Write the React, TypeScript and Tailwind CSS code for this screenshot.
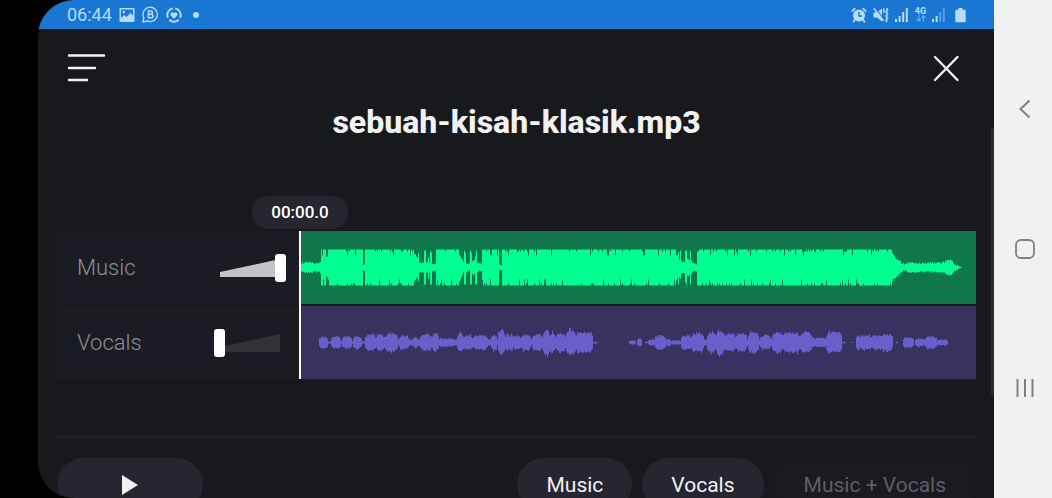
import { useMemo, useState } from "react";

type Point = [x: number, amplitude: number];

const WAVE_WIDTH = 675;
const WAVE_HEIGHT = 73;

// Envelope of the music stem: full level with short drop-outs and a fade-out.
const MUSIC: Point[] = [
  [0, 4], [6, 5], [13, 4], [19, 5], [20, 17], [24, 17], [25, 10], [26, 10], [27, 17], [61, 17],
  [62, 3], [63, 3], [64, 17], [112, 17], [113, 14], [116, 9], [117, 14], [118, 5], [122, 5],
  [123, 16], [124, 16], [125, 5], [126, 5], [127, 11], [128, 5], [129, 16], [130, 16], [131, 4],
  [134, 4], [135, 17], [157, 17], [158, 13], [161, 8], [162, 5], [163, 16], [164, 16], [165, 4],
  [168, 4], [169, 16], [170, 16], [171, 7], [173, 7], [174, 16], [175, 16], [176, 4], [180, 4],
  [181, 17], [188, 17], [189, 12], [190, 17], [197, 17], [198, 3], [200, 3], [201, 17],
  [374, 17], [375, 12], [376, 12], [377, 16], [378, 9], [379, 16], [380, 6], [383, 6], [384, 16],
  [385, 16], [386, 8], [388, 8], [389, 16], [390, 6], [391, 4], [395, 4], [396, 17],
  [590, 17], [592, 12], [597, 7], [603, 3], [609, 5], [617, 4], [642, 5], [645, 7], [649, 8],
  [653, 4], [658, 1], [661, 0], [674, 0],
];

// Envelope of the vocal stem: one entry for each sung phrase (start, end, level).
const PHRASES: [number, number, number][] = [
  [18, 27, 6], [30, 40, 6], [41, 51, 6], [52, 61, 6], [64, 75, 8], [75, 84, 8], [84, 97, 9],
  [98, 108, 7], [111, 118, 5], [119, 131, 8], [131, 138, 9], [137, 153, 4], [156, 163, 9],
  [162, 172, 7], [172, 187, 7], [190, 196, 8], [197, 204, 13], [204, 209, 9], [209, 212, 11],
  [212, 220, 7], [220, 230, 8], [231, 242, 8], [242, 249, 13], [249, 254, 10], [254, 265, 9],
  [265, 275, 12], [275, 292, 10], [292, 297, 1], [328, 335, 2], [336, 341, 4], [344, 347, 1],
  [347, 355, 3], [354, 365, 7], [365, 370, 4], [370, 380, 2], [380, 391, 7], [390, 403, 9],
  [406, 415, 10], [415, 424, 12], [424, 435, 9], [435, 446, 9], [447, 458, 10],
  [459, 470, 7], [471, 482, 10], [482, 499, 10], [499, 511, 10], [510, 514, 6],
  [514, 525, 5], [525, 541, 10], [541, 545, 1], [550, 552, 1], [555, 560, 8],
  [559, 571, 7], [570, 582, 7], [580, 592, 8], [595, 597, 1], [602, 613, 5], [614, 624, 4],
  [624, 636, 6], [636, 647, 3],
];

const noise = (n: number) => {
  const s = Math.sin(n * 127.1 + 11.7) * 43758.5453;
  return s - Math.floor(s);
};

const musicLevel = (x: number) => {
  let i = 0;
  while (i < MUSIC.length - 2 && MUSIC[i + 1][0] <= x) i++;
  const [x0, a0] = MUSIC[i];
  const [x1, a1] = MUSIC[i + 1];
  return a0 + ((a1 - a0) * Math.min(1, (x - x0) / (x1 - x0)));
};

const vocalFloor = (x: number) => {
  if ((x > 63 && x < 292) || (x > 380 && x < 541) || (x > 555 && x < 592)) return 3;
  if ((x > 18 && x <= 63) || (x > 354 && x <= 380)) return 1;
  return 0;
};

const vocalLevel = (x: number) => {
  let level = vocalFloor(x);
  for (const [start, end, peak] of PHRASES) {
    if (x < start || x >= end) continue;
    const edge = Math.min(x - start, end - 1 - x);
    level = Math.max(level, peak * Math.min(1, 0.7 + edge * 0.15));
  }
  return level;
};

// Draws one pixel-wide column for each sample, mirrored about the middle line.
function buildPath(level: (x: number) => number, vary: (amp: number, r: number) => number, seed: number) {
  const mid = 36.5;
  let top = "";
  let bottom = "";
  for (let x = 0; x < WAVE_WIDTH; x++) {
    const amp = level(x);
    const up = vary(amp, noise(x + seed));
    const down = vary(amp, noise(x * 1.7 + seed + 900));
    top += `L${x},${(mid - up).toFixed(1)}H${x + 1}`;
    bottom = `L${x + 1},${(mid + down).toFixed(1)}H${x}` + bottom;
  }
  return `M0,${mid}${top}${bottom}Z`;
}

const varyMusic = (amp: number, r: number) => {
  if (amp > 15) return r > 0.93 ? amp - 5 : r > 0.8 ? amp - 1 : amp + 1;
  return amp + (amp > 1 ? (r - 0.5) * 2 : 0);
};
const varyVocals = (amp: number, r: number) => amp * (r > 0.9 ? 1.2 : 0.85 + r * 0.25);

function Wave({ kind }: { kind: "music" | "vocals" }) {
  const d = useMemo(
    () => (kind === "music" ? buildPath(musicLevel, varyMusic, 3) : buildPath(vocalLevel, varyVocals, 41)),
    [kind],
  );
  return (
    <svg
      className="block h-[73px] w-full"
      viewBox={`0 0 ${WAVE_WIDTH} ${WAVE_HEIGHT}`}
      preserveAspectRatio="none"
      aria-hidden="true"
    >
      <path d={d} className={kind === "music" ? "fill-[#00ff90]" : "fill-[#6b5ecb]"} />
    </svg>
  );
}

function TrackControl({ id, name, initial }: { id: string; name: string; initial: number }) {
  const [value, setValue] = useState(initial);
  return (
    <div className="flex h-[73px] items-center justify-between bg-[#1b1b23] pr-[13px] pl-5">
      <label htmlFor={id} className="text-[22px] font-light text-[#8e8e97]">
        {name}
      </label>
      <div className="relative h-7 w-[72px]">
        <svg className="absolute top-[5px] left-[6px] h-[18px] w-[60px]" viewBox="0 0 60 18" aria-hidden="true">
          <path d="M0 13L60 0V18H0Z" className={value > 0 ? "fill-[#c3c3c5]" : "fill-[#323237]"} />
        </svg>
        <input
          id={id}
          type="range"
          min={0}
          max={100}
          value={value}
          onChange={(e) => setValue(Number(e.target.value))}
          className="absolute inset-0 m-0 h-7 w-full cursor-pointer appearance-none bg-transparent [&::-webkit-slider-thumb]:h-7 [&::-webkit-slider-thumb]:w-[11px] [&::-webkit-slider-thumb]:appearance-none [&::-webkit-slider-thumb]:rounded-[3px] [&::-webkit-slider-thumb]:bg-white"
        />
      </div>
    </div>
  );
}

function Signal({ dim = false }: { dim?: boolean }) {
  return (
    <svg className="h-4 w-[14px]" viewBox="0 0 14 16" fill="currentColor" aria-hidden="true">
      <rect x="0" y="12" width="2" height="3" />
      <rect x="3.6" y="9" width="2" height="6" />
      <rect x="7.2" y="5" width="2" height="10" opacity={dim ? 0.4 : 1} />
      <rect x="10.8" y="1" width="2" height="14" opacity={dim ? 0.4 : 1} />
    </svg>
  );
}

function StatusBar() {
  return (
    <div className="flex h-[29px] shrink-0 items-center justify-between bg-[#1976d2] pr-7 pl-[29px] text-[#b5dcfb]">
      <div className="flex items-center gap-[7px]">
        <span className="text-[18px] leading-7">06:44</span>
        <svg className="h-4 w-4" viewBox="0 0 16 16" aria-hidden="true">
          <path
            fill="currentColor"
            fillRule="evenodd"
            d="M1.500 1h13a1 1 0 0 1 1 1v12a1 1 0 0 1-1 1h-13a1 1 0 0 1-1-1V2a1 1 0 0 1 1-1ZM2 2.500V11l3-3 2.500 2L11.500 6 14 8.500v-6ZM4.800 3.800a1.300 1.300 0 1 1 0 2.600 1.300 1.300 0 0 1 0-2.600Z"
          />
        </svg>
        <svg className="h-[17px] w-[17px]" viewBox="0 0 17 17" aria-hidden="true">
          <path
            d="M1 16l.8-4.300A7.200 7.200 0 1 1 5.300 15Z"
            fill="none"
            stroke="currentColor"
            strokeWidth="1.400"
            strokeLinejoin="round"
          />
          <path
            d="M6.500 5h2.300a1.600 1.600 0 0 1 0 3.300H6.500ZM6.500 8.300h2.700a1.700 1.700 0 0 1 0 3.500H6.500Z"
            fill="none"
            stroke="currentColor"
            strokeWidth="1.600"
          />
        </svg>
        <svg className="h-4 w-4" viewBox="0 0 16 16" aria-hidden="true">
          <path
            d="M6.800 1.400a6.700 6.700 0 0 0-4.900 9.300M3.300 12.800a6.700 6.700 0 0 0 9.600-.2M14.100 10.700A6.700 6.700 0 0 0 9.200 1.400"
            fill="none"
            stroke="currentColor"
            strokeWidth="1.900"
          />
          <path
            d="M8 11.800 4.900 8.600a1.900 1.900 0 0 1 3.100-2.400 1.900 1.900 0 0 1 3.100 2.400Z"
            fill="currentColor"
          />
        </svg>
        <span className="ml-1 h-[6px] w-[6px] rounded-full bg-current" />
      </div>
      <div className="flex items-center gap-[6px]">
        <svg className="h-4 w-4" viewBox="0 0 16 16" aria-hidden="true">
          <circle cx="8" cy="8.500" r="6" fill="currentColor" />
          <path d="M8 5v4h3" fill="none" stroke="#1976d2" strokeWidth="1.400" />
          <path
            d="M.7 4.600 4.300 1.200M15.300 4.600 11.700 1.200M4 12.500 2.200 15.200M12 12.500l1.800 2.700"
            fill="none"
            stroke="currentColor"
            strokeWidth="1.700"
          />
        </svg>
        <svg className="h-4 w-4" viewBox="0 0 16 16" aria-hidden="true">
          <path d="M.5 5.500h3.500l5-4v13l-5-4H.5Z" fill="currentColor" />
          <path d="M2 .8l9.500 12.400" stroke="#1976d2" strokeWidth="1.200" />
          <path d="M.8 1.200l9.700 12.600" stroke="currentColor" strokeWidth="1.400" />
          <path
            d="M10.800 1.500v4M13.500 1l1 2-1.500 2 1.500 2L13 9l1.500 2-1.500 2 1 2"
            fill="none"
            stroke="currentColor"
            strokeWidth="1.700"
          />
        </svg>
        <Signal />
        <span className="flex w-[11px] flex-col items-center">
          <span className="text-[9px] leading-[8px] font-bold">4G</span>
          <svg className="h-[7px] w-[10px] opacity-50" viewBox="0 0 10 7" aria-hidden="true">
            <path
              d="M3 0v6M.8 4 3 6.200 5 4M7.500 7V1M5.500 3l2-2.200 2 2.200"
              fill="none"
              stroke="currentColor"
              strokeWidth="1.200"
            />
          </svg>
        </span>
        <Signal dim />
        <svg className="ml-[3px] h-4 w-[11px]" viewBox="0 0 11 16" fill="currentColor" aria-hidden="true">
          <path d="M3.500 1h4v1.800H10a.7.7 0 0 1 .7.7v11a.7.7 0 0 1-.7.700H1a.7.7 0 0 1-.7-.7v-11a.7.7 0 0 1 .7-.7h2.500Z" />
        </svg>
      </div>
    </div>
  );
}

function NavBar() {
  return (
    <nav
      aria-label="System"
      className="flex w-[58px] shrink-0 flex-col items-center justify-between bg-[#f1f1f1] pt-[97px] pb-[98px] pl-[3px] text-[#808080]"
    >
      <button type="button" aria-label="Back" className="h-6 w-6">
        <svg viewBox="0 0 24 24" fill="none" stroke="currentColor" strokeWidth="2" aria-hidden="true">
          <path d="M16.500 3.500 7.500 12l9 8.500" />
        </svg>
      </button>
      <button type="button" aria-label="Home" className="h-6 w-6">
        <svg viewBox="0 0 24 24" fill="none" stroke="currentColor" strokeWidth="1.800" aria-hidden="true">
          <rect x="3" y="3" width="18" height="18" rx="5" />
        </svg>
      </button>
      <button type="button" aria-label="Recent apps" className="h-6 w-6">
        <svg viewBox="0 0 24 24" fill="none" stroke="currentColor" strokeWidth="2" aria-hidden="true">
          <path d="M4.500 3v18M12 3v18M19.500 3v18" />
        </svg>
      </button>
    </nav>
  );
}

const pill = "h-[53px] rounded-full text-[21px] leading-6";

export default function App() {
  return (
    <div className="flex h-screen overflow-hidden bg-black font-['Roboto',sans-serif]">
      <div className="relative ml-[38px] flex min-w-0 flex-1 flex-col overflow-hidden rounded-l-[36px] bg-[#18191d]">
        <StatusBar />
        <main className="flex flex-col pr-[18px] pl-[19px]">
          <header className="flex items-center justify-between px-[10px] pt-[22px]">
            <button type="button" aria-label="Menu" className="h-8 w-10">
              <svg viewBox="0 0 40 32" fill="none" stroke="#f2f2f5" strokeWidth="2.400" strokeLinecap="round" aria-hidden="true">
                <path d="M2 4.500h35M2 17h26M2 29h18" />
              </svg>
            </button>
            <button type="button" aria-label="Close" className="mr-1 h-8 w-8">
              <svg viewBox="0 0 32 32" fill="none" stroke="#f2f2f5" strokeWidth="2.400" strokeLinecap="round" aria-hidden="true">
                <path d="M5 6l22.500 23M27.500 6 5 29" />
              </svg>
            </button>
          </header>
          <h1 className="mt-[19px] text-center text-[32px] leading-10 font-extrabold text-[#f2f2f5]">
            sebuah-kisah-klasik.mp3
          </h1>

          <section aria-label="Tracks" className="mt-[89px] flex">
            <div className="flex w-[242px] shrink-0 flex-col gap-[2px]">
              <TrackControl id="music-volume" name="Music" initial={100} />
              <TrackControl id="vocals-volume" name="Vocals" initial={0} />
            </div>
            <div className="relative w-[2px] shrink-0 bg-white">
              <time className="absolute bottom-full left-1/2 mb-[2px] flex h-[33px] w-24 -translate-x-1/2 items-center justify-center rounded-full bg-[#262530] text-[17px] font-medium text-white">
                00:00.0
              </time>
            </div>
            <div className="flex min-w-0 flex-1 flex-col gap-[2px]">
              <div className="bg-[#10774c]">
                <Wave kind="music" />
              </div>
              <div className="bg-[#37325f]">
                <Wave kind="vocals" />
              </div>
            </div>
          </section>

          <hr className="mt-[57px] border-t-2 border-[#222327]" />

          <footer className="mt-5 flex items-start justify-between">
            <button type="button" aria-label="Play" className={`${pill} flex w-[146px] items-center justify-center bg-[#262530]`}>
              <svg className="h-5 w-4" viewBox="0 0 16 20" fill="#f2f2f5" aria-hidden="true">
                <path d="M0 0l16 10L0 20Z" />
              </svg>
            </button>
            <div className="flex gap-[10px]">
              <button type="button" className={`${pill} bg-[#262530] px-[29px] text-[#f2f2f5]`}>
                Music
              </button>
              <button type="button" className={`${pill} bg-[#262530] px-[29px] text-[#f2f2f5]`}>
                Vocals
              </button>
              <button type="button" disabled className={`${pill} bg-[#1a1a20] px-[30px] text-[#5f5f64]`}>
                Music + Vocals
              </button>
            </div>
          </footer>
        </main>
        <div className="absolute top-[128px] right-0 h-[267px] w-[3px] bg-[#2b2b2f]" />
      </div>
      <NavBar />
    </div>
  );
}
